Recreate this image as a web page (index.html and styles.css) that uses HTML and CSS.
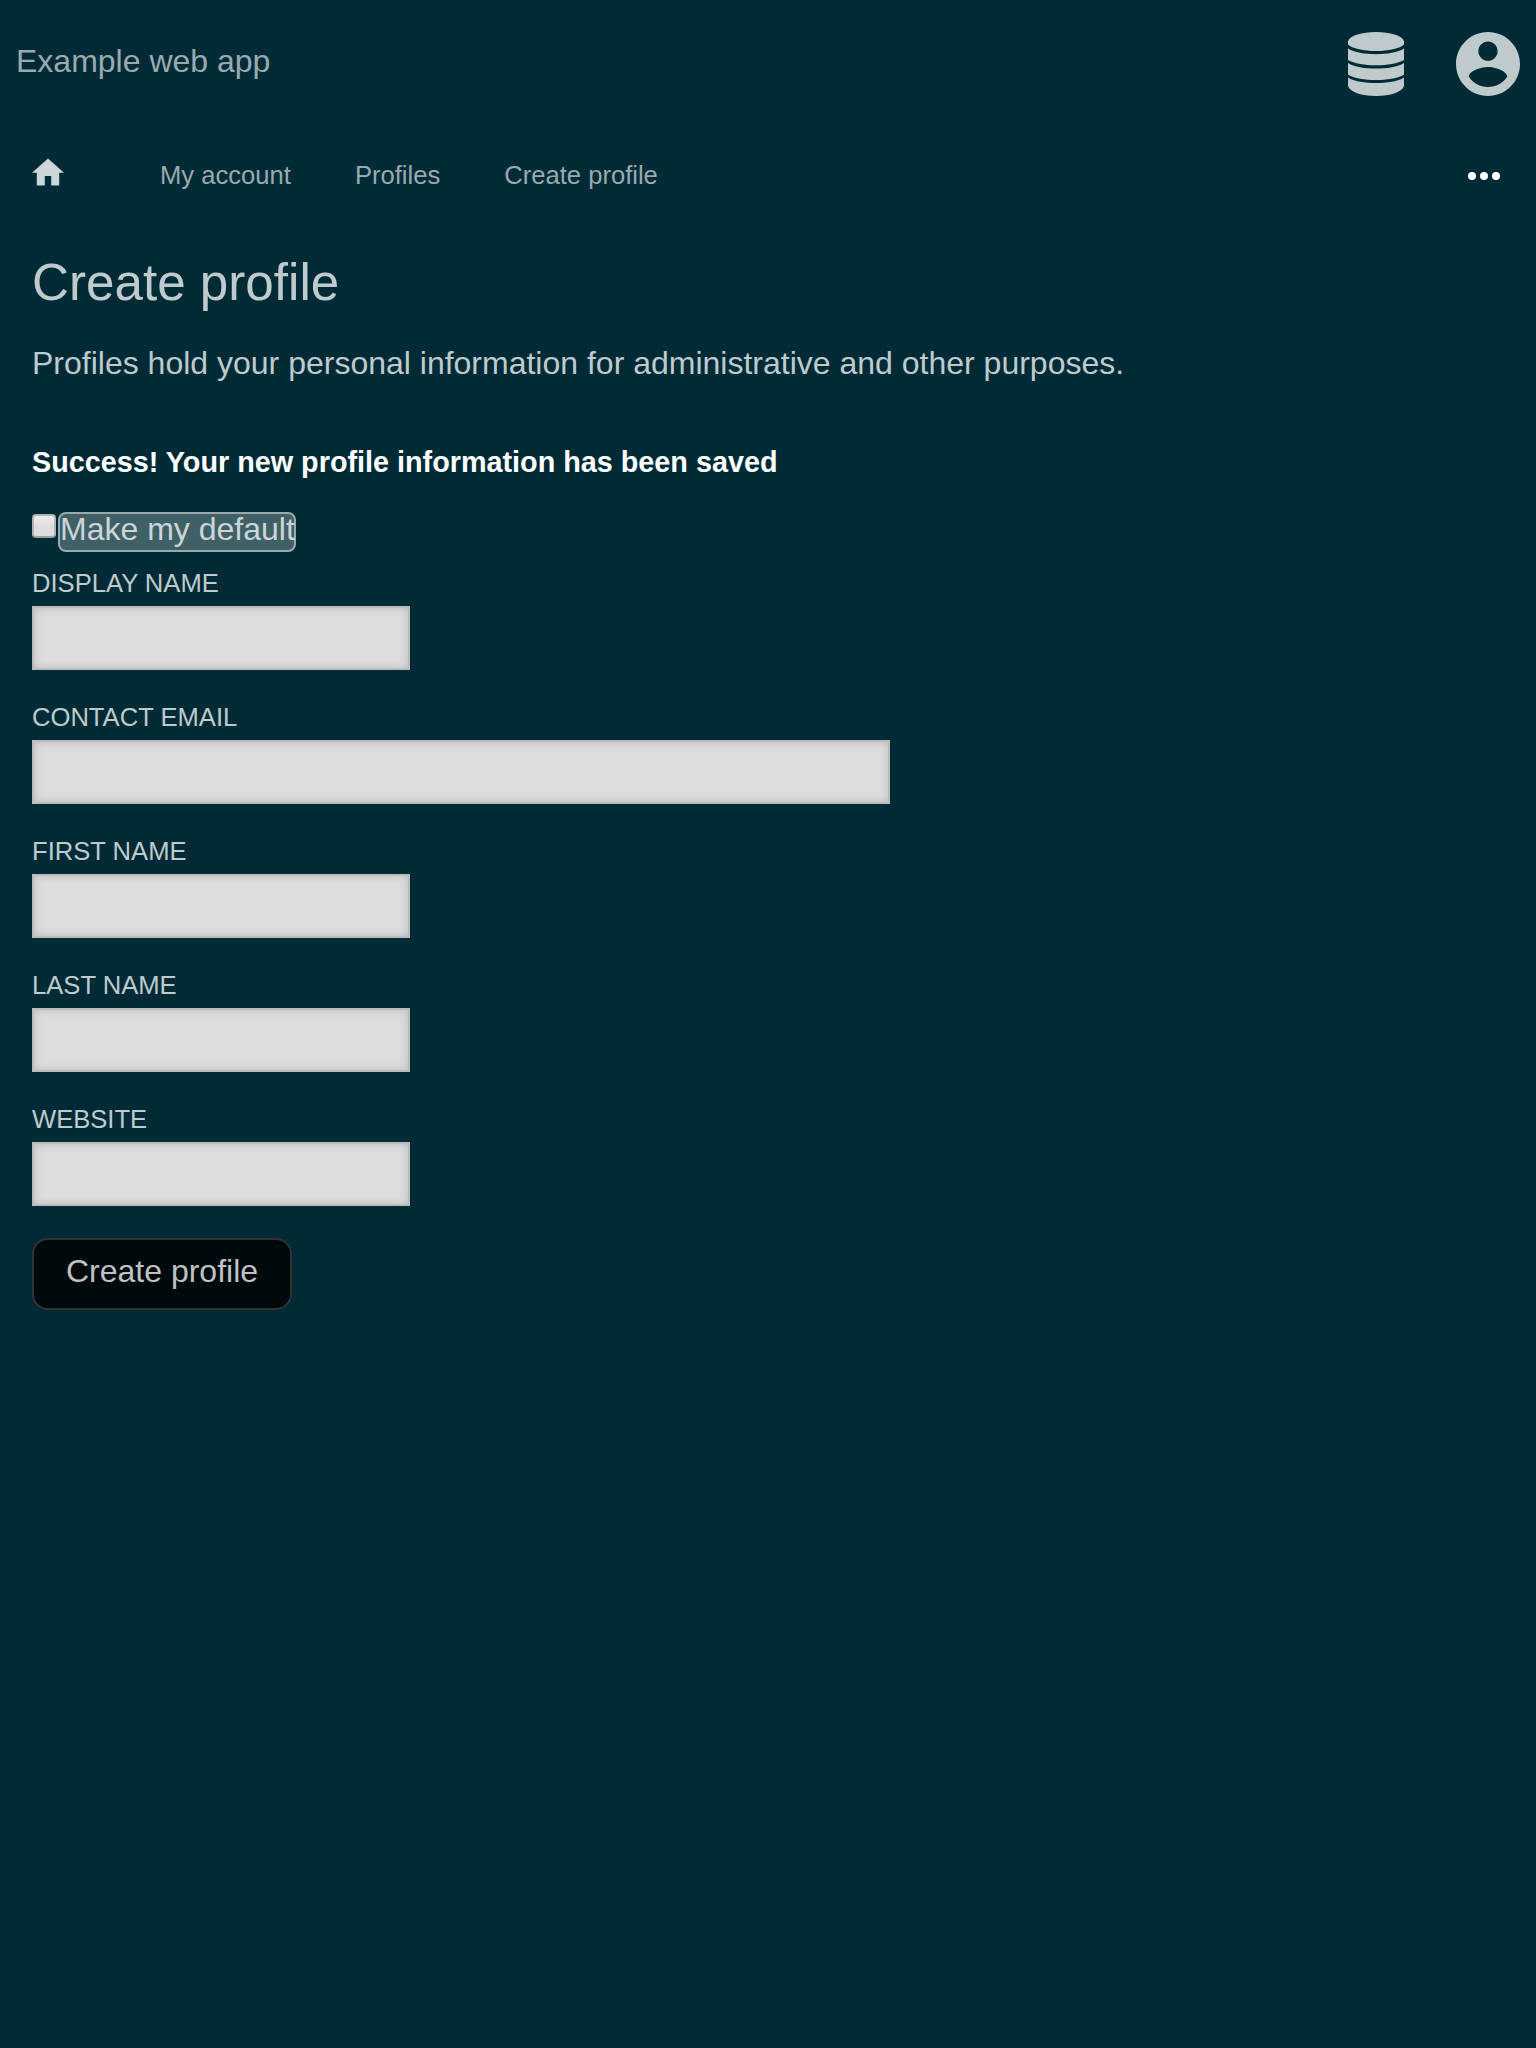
FILE: index.html
```html
<!DOCTYPE html>
<html lang="en">
<head>
<meta charset="utf-8">
<title>Create profile</title>
<link rel="stylesheet" href="styles.css">
</head>
<body>
<header class="header">
  <a class="brand">Example web app</a>
  <div class="header-icons">
    <svg class="icon-data" viewBox="0 0 56 64"><path d="M0 9C2 3.500 14 0 28 0s26 3.500 28 9v3.500C52 16.500 40 19 28 19S4 16.500 0 12.500zM0 16.500C6 20.500 17 22.200 28 22.200s22-1.700 28-5.700V28c-6 3.700-17 5.200-28 5.200S6 31.700 0 28zM0 31c6 4 17 5.600 28 5.600S50 35 56 31v11.700c-6 3.700-17 5.200-28 5.200S6 46.400 0 42.700zM0 45.600c6 4 17 5.500 28 5.500s22-1.500 28-5.500V54c-2 6-13 10-28 10S2 60 0 54z"/></svg>
    <svg class="icon-user" viewBox="2 2 20 20"><path d="M12 2C6.480 2 2 6.480 2 12s4.480 10 10 10 10-4.480 10-10S17.520 2 12 2zm0 3c1.660 0 3 1.340 3 3s-1.340 3-3 3-3-1.340-3-3 1.340-3 3-3zm0 14.200c-2.500 0-4.710-1.280-6-3.220.030-1.990 4-3.080 6-3.080 1.990 0 5.970 1.090 6 3.080-1.290 1.940-3.500 3.220-6 3.220z"/></svg>
  </div>
</header>
<nav class="nav">
  <svg class="icon-home" viewBox="2 3 20 17"><path d="M10 20v-6h4v6h5v-8h3L12 3 2 12h3v8z"/></svg>
  <div class="crumbs">
    <a>My account</a>
    <a>Profiles</a>
    <a>Create profile</a>
  </div>
  <svg class="icon-more" viewBox="0 0 32 8"><circle cx="4" cy="4" r="4"/><circle cx="16" cy="4" r="4"/><circle cx="28" cy="4" r="4"/></svg>
</nav>
<main class="main">
  <h1 class="title">Create profile</h1>
  <p class="intro">Profiles hold your personal information for administrative and other purposes.</p>
  <p class="message">Success! Your new profile information has been saved</p>
  <form class="form">
    <div class="check-row">
      <input class="checkbox" type="checkbox" id="default">
      <label class="check-label" for="default">Make my default</label>
    </div>
    <div class="field">
      <label for="display">Display name</label>
      <input class="input" id="display" type="text">
    </div>
    <div class="field">
      <label for="email">Contact email</label>
      <input class="input input-wide" id="email" type="email">
    </div>
    <div class="field">
      <label for="first">First name</label>
      <input class="input" id="first" type="text">
    </div>
    <div class="field">
      <label for="last">Last name</label>
      <input class="input" id="last" type="text">
    </div>
    <div class="field">
      <label for="website">Website</label>
      <input class="input" id="website" type="url">
    </div>
    <button class="button" type="button">Create profile</button>
  </form>
</main>
</body>
</html>
```
FILE: styles.css
```css
* {
  box-sizing: border-box;
}

body {
  margin: 0;
  min-height: 100vh;
  background: #002b36;
  color: #bfcacd;
  font: 32px/36px "Liberation Sans", Arial, sans-serif;
}

svg {
  display: block;
  fill: #bfcacd;
}

.header {
  display: flex;
  justify-content: space-between;
  align-items: flex-start;
  height: 128px;
  padding: 32px 16px;
}

.brand {
  margin-top: 11px;
  color: #99aaaf;
}

.header-icons {
  display: flex;
  gap: 52px;
}

.icon-data {
  width: 56px;
  height: 64px;
}

.icon-user {
  width: 64px;
  height: 64px;
}

.nav {
  display: flex;
  align-items: flex-start;
  height: 94px;
  padding: 30px 36px 0 32px;
  color: #99aaaf;
  font-size: 25.6px;
  line-height: 28px;
}

.nav .icon-home {
  width: 32px;
  height: 28px;
  fill: #ccd5d7;
}

.crumbs {
  display: flex;
  gap: 64px;
  margin: 3px 0 0 96px;
}

.nav .icon-more {
  width: 32px;
  height: 8px;
  margin: 14px 0 0 auto;
  fill: #fff;
}

.main {
  padding: 32px;
}

.title {
  margin: 0 0 34px;
  font-size: 51.2px;
  font-weight: 400;
  line-height: 57px;
}

.intro {
  margin: 0 0 65px;
}

.message {
  margin: 0 0 34px;
  color: #fff;
  font-size: 28.77px;
  font-weight: 700;
  line-height: 32px;
}

.check-row {
  display: flex;
  align-items: flex-start;
  gap: 2px;
  margin-bottom: 17px;
}

.checkbox {
  appearance: none;
  width: 24px;
  height: 24px;
  margin: 2px 0 0;
  border: 2px solid #b2b2b2;
  border-bottom-color: #a0a0a0;
  border-radius: 4px;
  background: linear-gradient(#eee, #ddd 50%);
}

.check-label {
  width: 238px;
  height: 40px;
  padding-bottom: 6px;
  border: 2px solid #99aaaf;
  border-radius: 8px;
  background: #406068;
  color: #ccd5d7;
  line-height: 30px;
  white-space: nowrap;
}

.field {
  display: flex;
  flex-direction: column;
  align-items: flex-start;
  gap: 9px;
  margin-bottom: 33px;
  font-size: 25.6px;
  line-height: 28px;
  text-transform: uppercase;
}

.input {
  width: 378px;
  height: 64px;
  margin: 0;
  padding: 0 14px;
  border: 2px solid #bbb;
  border-radius: 0;
  outline: 0;
  background: #ddd;
  box-shadow: inset 0 0 8px #bbb;
  font: inherit;
}

.input-wide {
  width: 858px;
}

.button {
  display: block;
  width: 260px;
  height: 72px;
  margin: -1px 0 0;
  padding: 0 0 6px;
  border: 2px solid #333;
  border-radius: 16px;
  background: #00090b;
  color: #bfc2c2;
  font: inherit;
}
```
